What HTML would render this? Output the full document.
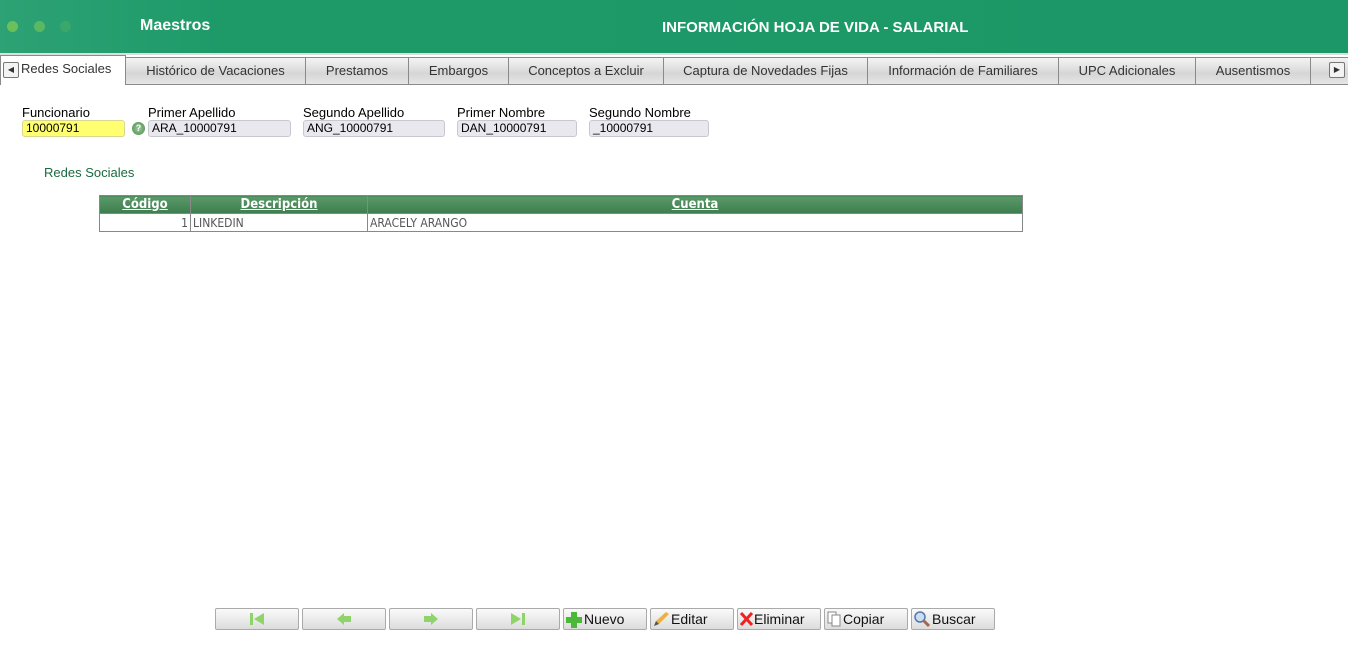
<!DOCTYPE html>
<html><head><meta charset="utf-8"><style>
*{box-sizing:border-box;margin:0;padding:0}
body{width:1348px;height:659px;background:#fff;font-family:"Liberation Sans",Arial,sans-serif;position:relative;overflow:hidden;color:#000}
.hdr{position:absolute;left:0;top:0;width:1348px;height:53px;background:linear-gradient(90deg,#2da274 0,#1e9a69 220px,#1c9868 100%)}
.dot{position:absolute;top:21px;width:11px;height:11px;border-radius:50%}
.hdr .t1{position:absolute;left:140px;top:17px;color:#fff;font-weight:bold;font-size:16px}
.hdr .t2{position:absolute;left:662px;top:19px;color:#fff;font-weight:bold;font-size:15px}
.tabs{position:absolute;left:0;top:53px;width:1348px;height:31px;background:#fff;border-top:2px solid #ddd}
.tab{position:absolute;top:2px;height:28px;border:1px solid #8a8a8a;background:linear-gradient(#f4f4f4,#d6d6d6 60%,#e6e6e6);font-size:13px;color:#333;text-align:center;line-height:26px}
.tab.act{background:#fff;border-bottom:none;top:0;height:30px;text-align:left;padding-left:20px}
.arr{position:absolute;top:7px;width:16px;height:16px;border:1px solid #777;border-radius:2px;background:#f3f3f3;font-size:8px;line-height:14px;text-align:center;color:#333}
.lbl{position:absolute;top:105px;font-size:13px;color:#000}
.inp{position:absolute;top:120px;height:17px;border:1px solid #c8c8d0;border-radius:3px;background:#e8e8ee;font-size:12px;padding-left:3px;line-height:15px}
table{position:absolute;left:99px;top:195px;width:924px;border-collapse:collapse;font-size:12px;font-family:"DejaVu Sans Condensed","Liberation Sans Narrow",sans-serif}
th{background:linear-gradient(#5a9a68,#3e7d4e);color:#fff;text-decoration:underline;height:18px;border:1px solid #888;font-size:13px}
td{border:1px solid #888;height:18px;color:#555;padding:0 2px}
.btn{position:absolute;top:608px;width:84px;height:22px;border:1px solid #aaa;border-radius:2px;background:linear-gradient(#fafafa,#dcdcdc);font-size:14px;font-family:"Liberation Sans Narrow",sans-serif;display:flex;align-items:center;color:#111}
</style></head><body>
<div class="hdr">
<div class="dot" style="left:7px;background:#6cc05a"></div>
<div class="dot" style="left:34px;background:#5ab863"></div>
<div class="dot" style="left:60px;background:#3aa86a"></div>
<div class="t1">Maestros</div>
<div class="t2">INFORMACIÓN HOJA DE VIDA - SALARIAL</div>
</div>
<div class="tabs">
<div class="tab" style="left:125px;width:181px">Histórico de Vacaciones</div>
<div class="tab" style="left:305px;width:104px">Prestamos</div>
<div class="tab" style="left:408px;width:101px">Embargos</div>
<div class="tab" style="left:508px;width:156px">Conceptos a Excluir</div>
<div class="tab" style="left:663px;width:205px">Captura de Novedades Fijas</div>
<div class="tab" style="left:867px;width:192px">Información de Familiares</div>
<div class="tab" style="left:1058px;width:138px">UPC Adicionales</div>
<div class="tab" style="left:1195px;width:116px">Ausentismos</div>
<div class="tab" style="left:1310px;width:40px"></div>
<div class="tab act" style="left:0;width:126px">Redes Sociales</div>
<div class="arr" style="left:3px">◀</div>
<div class="arr" style="left:1329px">▶</div>
</div>
<div class="lbl" style="left:22px">Funcionario</div>
<div class="lbl" style="left:148px">Primer Apellido</div>
<div class="lbl" style="left:303px">Segundo Apellido</div>
<div class="lbl" style="left:457px">Primer Nombre</div>
<div class="lbl" style="left:589px">Segundo Nombre</div>
<div class="inp" style="left:22px;width:103px;background:#ffff70;border-color:#d8d890">10000791</div>
<div style="position:absolute;left:132px;top:122px;width:13px;height:13px;border-radius:50%;background:radial-gradient(#9c9,#4a8a4a);color:#fff;font-size:9px;font-weight:bold;text-align:center;line-height:13px">?</div>
<div class="inp" style="left:148px;width:143px">ARA_10000791</div>
<div class="inp" style="left:303px;width:142px">ANG_10000791</div>
<div class="inp" style="left:457px;width:120px">DAN_10000791</div>
<div class="inp" style="left:589px;width:120px">_10000791</div>
<div style="position:absolute;left:44px;top:165px;font-size:13px;color:#1a6a40">Redes Sociales</div>
<table>
<tr><th style="width:91px">Código</th><th style="width:177px">Descripción</th><th>Cuenta</th></tr>
<tr><td style="text-align:right">1</td><td>LINKEDIN</td><td>ARACELY ARANGO</td></tr>
</table>
<div class="btn" style="left:215px;justify-content:center"><svg width="18" height="16"><rect x="2" y="2" width="3" height="12" fill="#8fd46a"/><path d="M16 2 L6 8 L16 14Z" fill="#8fd46a"/></svg></div>
<div class="btn" style="left:302px;justify-content:center"><svg width="18" height="16"><path d="M2 8 L9 2 V5 H16 V11 H9 V14Z" fill="#8fd46a"/></svg></div>
<div class="btn" style="left:389px;justify-content:center"><svg width="18" height="16"><path d="M16 8 L9 2 V5 H2 V11 H9 V14Z" fill="#8fd46a"/></svg></div>
<div class="btn" style="left:476px;justify-content:center"><svg width="18" height="16"><path d="M2 2 L12 8 L2 14Z" fill="#8fd46a"/><rect x="13" y="2" width="3" height="12" fill="#8fd46a"/></svg></div>
<div class="btn" style="left:563px"><svg width="20" height="18"><path d="M7 2h6v5h5v6h-5v5H7v-5H2V7h5z" fill="#4cb83a"/></svg>Nuevo</div>
<div class="btn" style="left:650px"><svg width="20" height="18"><path d="M3 16 L5 11 L15 2 L18 4 L8 14Z" fill="#f0b040"/><path d="M3 16 L5 11 L8 14Z" fill="#555"/></svg>Editar</div>
<div class="btn" style="left:737px"><svg width="16" height="18"><path d="M3 3 L14 15 M14 3 L3 15" stroke="#e22" stroke-width="3"/></svg>Eliminar</div>
<div class="btn" style="left:824px"><svg width="18" height="18"><rect x="3" y="2" width="8" height="11" fill="#fff" stroke="#888"/><rect x="7" y="5" width="8" height="11" fill="#fff" stroke="#888"/></svg>Copiar</div>
<div class="btn" style="left:911px"><svg width="20" height="18"><circle cx="8" cy="7" r="5" fill="#cde" stroke="#57a" stroke-width="1.5"/><path d="M12 11 L17 16" stroke="#a64" stroke-width="3"/></svg>Buscar</div>
</body></html>
